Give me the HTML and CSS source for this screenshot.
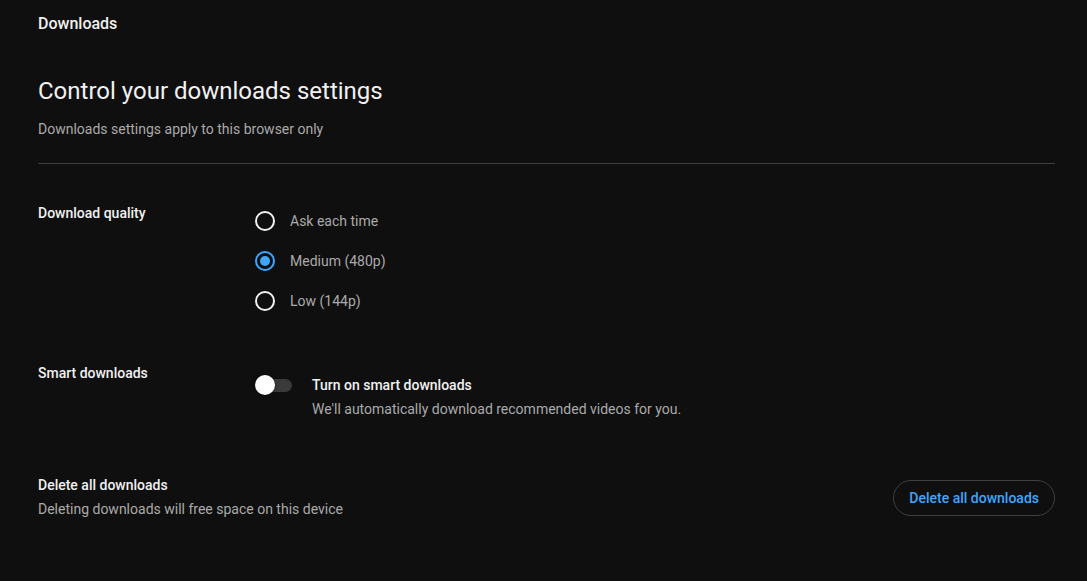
FILE: index.html
```html
<!DOCTYPE html>
<html lang="en">
<head>
<meta charset="utf-8">
<title>Downloads</title>
<link rel="stylesheet" href="styles.css">
</head>
<body>
<main class="page">
  <div class="page-title">Downloads</div>
  <h1 class="heading">Control your downloads settings</h1>
  <p class="subheading">Downloads settings apply to this browser only</p>
  <hr class="divider">

  <section class="row row-quality">
    <div class="row-label">Download quality</div>
    <div class="radio-group">
      <label class="radio-item">
        <span class="radio"></span>
        <span class="radio-text">Ask each time</span>
      </label>
      <label class="radio-item">
        <span class="radio radio-checked"><span class="radio-dot"></span></span>
        <span class="radio-text">Medium (480p)</span>
      </label>
      <label class="radio-item">
        <span class="radio"></span>
        <span class="radio-text">Low (144p)</span>
      </label>
    </div>
  </section>

  <section class="row row-smart">
    <div class="row-label">Smart downloads</div>
    <div class="toggle-block">
      <div class="toggle">
        <span class="toggle-track"></span>
        <span class="toggle-knob"></span>
      </div>
      <div class="toggle-texts">
        <div class="toggle-title">Turn on smart downloads</div>
        <div class="toggle-desc">We'll automatically download recommended videos for you.</div>
      </div>
    </div>
  </section>

  <section class="row-delete">
    <div class="delete-texts">
      <div class="row-label">Delete all downloads</div>
      <div class="delete-desc">Deleting downloads will free space on this device</div>
    </div>
    <button class="delete-btn" type="button">Delete all downloads</button>
  </section>
</main>
</body>
</html>
```

FILE: styles.css
```css
* { box-sizing: border-box; }

html, body {
  margin: 0;
  padding: 0;
  background: #0f0f0f;
  color: #f1f1f1;
  font-family: Roboto, "Liberation Sans", Arial, sans-serif;
}

.page {
  padding: 13px 32px 40px 38px;
}

.page-title {
  font-size: 16px;
  line-height: 22px;
  font-weight: 500;
}

.heading {
  margin: 40px 0 0;
  font-size: 24px;
  line-height: 32px;
  font-weight: 400;
}

.subheading {
  margin: 12px 0 0;
  font-size: 14px;
  line-height: 20px;
  color: #aaaaaa;
}

.divider {
  margin: 24px 0 0;
  border: 0;
  border-top: 1px solid #3f3f3f;
  height: 0;
}

.row {
  display: flex;
  align-items: flex-start;
}

.row-label {
  width: 217px;
  flex: none;
  font-size: 14px;
  line-height: 20px;
  font-weight: 500;
  color: #f1f1f1;
}

.row-quality {
  margin-top: 37px;
}

.row-quality .row-label {
  margin-top: 2px;
}

.radio-group {
  display: flex;
  flex-direction: column;
}

.radio-item {
  display: flex;
  align-items: center;
  height: 40px;
}

.radio {
  width: 20px;
  height: 20px;
  border: 2px solid #f1f1f1;
  border-radius: 50%;
  display: flex;
  align-items: center;
  justify-content: center;
  flex: none;
}

.radio-checked {
  border-color: #3ea6ff;
}

.radio-dot {
  width: 10px;
  height: 10px;
  border-radius: 50%;
  background: #3ea6ff;
}

.radio-text {
  margin-left: 15px;
  font-size: 14px;
  line-height: 20px;
  color: #aaaaaa;
}

.row-smart {
  margin-top: 42px;
}

.toggle-block {
  display: flex;
  align-items: flex-start;
  padding-top: 12px;
}

.toggle {
  position: relative;
  width: 37px;
  height: 20px;
  flex: none;
}

.toggle-track {
  position: absolute;
  left: 3px;
  top: 4px;
  width: 34px;
  height: 13px;
  border-radius: 7px;
  background: #3a3a3a;
}

.toggle-knob {
  position: absolute;
  left: 0;
  top: 0;
  width: 20px;
  height: 20px;
  border-radius: 50%;
  background: #ffffff;
  box-shadow: 0 1px 3px rgba(0, 0, 0, 0.5);
}

.toggle-texts {
  margin-left: 20px;
}

.toggle-title {
  font-size: 14px;
  line-height: 20px;
  font-weight: 500;
}

.toggle-desc {
  margin-top: 4px;
  font-size: 14px;
  line-height: 20px;
  color: #aaaaaa;
}

.row-delete {
  margin-top: 56px;
  display: flex;
  align-items: center;
  justify-content: space-between;
}

.delete-desc {
  margin-top: 4px;
  font-size: 14px;
  line-height: 20px;
  color: #aaaaaa;
}

.delete-btn {
  margin-top: 2px;
  height: 36px;
  padding: 0 15px;
  border: 1px solid #3f3f3f;
  border-radius: 18px;
  background: transparent;
  color: #3ea6ff;
  font-family: Roboto, "Liberation Sans", Arial, sans-serif;
  font-size: 14px;
  font-weight: 500;
  cursor: pointer;
}
```
